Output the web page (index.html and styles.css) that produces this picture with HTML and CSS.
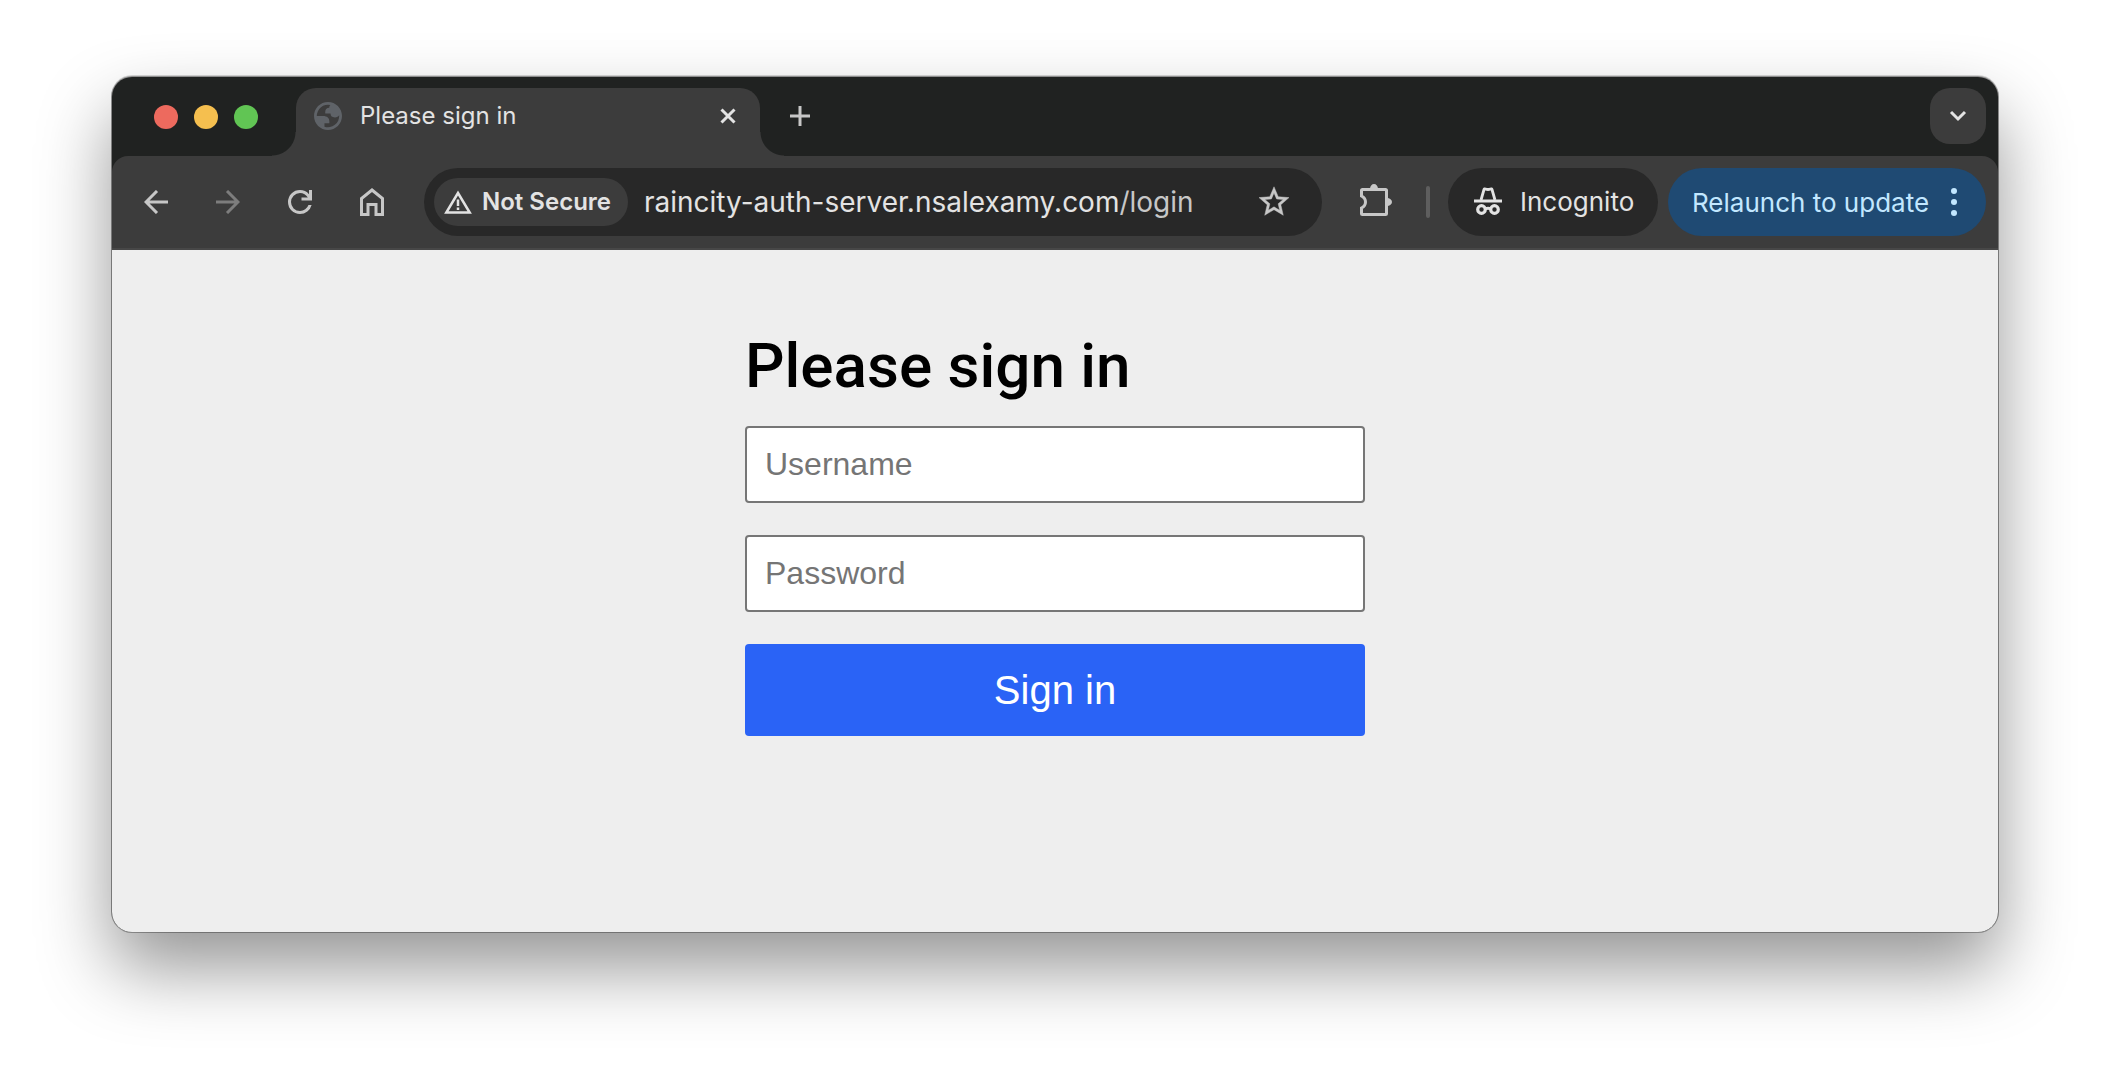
FILE: index.html
```html
<!DOCTYPE html>
<html lang="en">
<head>
<meta charset="utf-8">
<meta name="viewport" content="width=device-width, initial-scale=1">
<title>Please sign in</title>
<link rel="stylesheet" href="styles.css">
</head>
<body>
<div class="window">
  <header class="tab-strip">
    <div class="lights">
      <button class="light light-close" aria-label="Close window"></button>
      <button class="light light-min" aria-label="Minimise window"></button>
      <button class="light light-max" aria-label="Zoom window"></button>
    </div>
    <div class="tab">
      <svg class="favicon" viewBox="2 2 20 20" width="28" height="28" aria-hidden="true"><path fill="#5f6368" fill-rule="evenodd" d="M12 2C6.480 2 2 6.480 2 12s4.480 10 10 10 10-4.480 10-10S17.520 2 12 2zM4 12h4.400c3.407.022 4.922 1.730 4.543 5.127H9.488v2.470a8.004 8.004 0 0 0 10.498-8.083C19.327 12.504 18.332 13 17 13c-2.137 0-3.206-.916-3.206-2.750h-3.748c-.274-2.728.683-4.092 2.870-4.092 0-.975.327-1.597.811-1.970A8.004 8.004 0 0 0 4 12z"/></svg>
      <span class="tab-title">Please sign in</span>
      <button class="icon-button tab-close" aria-label="Close tab"><svg viewBox="0 0 16 16" width="16" height="16"><path d="M1.500 1.500l13 13M14.500 1.500l-13 13" stroke="#e3e3e3" stroke-width="3"/></svg></button>
    </div>
    <button class="icon-button new-tab" aria-label="New tab"><svg viewBox="0 0 20 20" width="20" height="20"><path d="M10 0v20M0 10h20" stroke="#c7c7c7" stroke-width="3"/></svg></button>
    <button class="icon-button tab-search" aria-label="Search tabs"><svg viewBox="0 0 18 12" width="18" height="12"><path d="M2 2l7 7 7-7" fill="none" stroke="#e3e3e3" stroke-width="3"/></svg></button>
  </header>

  <nav class="toolbar" aria-label="Browser toolbar">
    <div class="nav-buttons">
      <button class="icon-button" aria-label="Back"><svg viewBox="0 0 24 24" width="24" height="24"><path d="M24 12H2M13 1L2 12l11 11" fill="none" stroke="#c7c7c7" stroke-width="3"/></svg></button>
      <button class="icon-button" aria-label="Forward" disabled><svg viewBox="0 0 24 24" width="24" height="24"><path d="M0 12h22M11 1l11 11-11 11" fill="none" stroke="#7d7d7d" stroke-width="3"/></svg></button>
      <button class="icon-button" aria-label="Reload"><svg viewBox="4 4 16 16" width="24" height="24"><path fill="#c7c7c7" d="M12 20q-3.350 0-5.675-2.325T4 12t2.325-5.675T12 4q1.725 0 3.300.713T18 6.750V4h2v7h-7V9h4.200q-.8-1.400-2.187-2.200T12 6Q9.500 6 7.750 7.750T6 12t1.750 4.250T12 18q1.925 0 3.475-1.100T17.650 14h2.100q-.7 2.650-2.850 4.325T12 20z"/></svg></button>
      <button class="icon-button" aria-label="Home"><svg viewBox="0 0 24 28" width="24" height="28"><path d="M1.500 26.500V10.500L12 2l10.500 8.500v16h-6.500v-10H8v10z" fill="none" stroke="#c7c7c7" stroke-width="3"/></svg></button>
    </div>

    <div class="omnibox">
      <button class="security">
        <svg viewBox="0 0 28 24" width="28" height="24" aria-hidden="true"><path d="M14 3L2.300 22.500h23.400z" fill="none" stroke="#e3e3e3" stroke-width="2.500"/><path d="M14 9.500v6.500M14 17.500v2.500" stroke="#e3e3e3" stroke-width="2.500"/></svg>
        <span>Not Secure</span>
      </button>
      <a class="url" href="#">raincity-auth-server.nsalexamy.com<span class="url-path">/login</span></a>
      <button class="icon-button star" aria-label="Bookmark this tab"><svg viewBox="2 2 20 19" width="30" height="30"><path fill="#c7c7c7" stroke="#c7c7c7" stroke-width=".3" d="M22 9.240l-7.190-.62L12 2 9.190 8.630 2 9.240l5.460 4.730L5.820 21 12 17.270 18.180 21l-1.630-7.030L22 9.240zM12 15.400l-3.760 2.270 1-4.280-3.320-2.880 4.380-.38L12 6.100l1.710 4.040 4.380.38-3.320 2.880 1 4.280L12 15.400z"/></svg></button>
    </div>

    <button class="icon-button extensions" aria-label="Extensions"><svg viewBox="0 0 32 32" width="32" height="32"><path d="M3.500 5.500h22q1 0 1 1v23q0 1-1 1h-23q-1 0-1-1v-5.500q4-2 4-6t-4-6V6.500q0-1 1-1z" fill="none" stroke="#c7c7c7" stroke-width="3"/><path d="M10 5a4 5 0 0 1 8 0zM27 14a5 4 0 0 1 0 8z" fill="#c7c7c7"/></svg></button>
    <span class="divider"></span>
    <button class="pill incognito">
      <svg viewBox="0 0 28 28" width="28" height="28" aria-hidden="true"><path d="M0 12.500h28v3H0z" fill="#e3e3e3"/><path d="M7 13l3-10.500q.3-1 1.500-.5 2.500 1 5 0 1.200-.5 1.500.5L21 13" fill="none" stroke="#e3e3e3" stroke-width="2.800"/><circle cx="7.500" cy="22.500" r="3.800" fill="none" stroke="#e3e3e3" stroke-width="3.200"/><circle cx="20.500" cy="22.500" r="3.800" fill="none" stroke="#e3e3e3" stroke-width="3.200"/><path d="M11 22q3-1.500 6 0" fill="none" stroke="#e3e3e3" stroke-width="2.800"/></svg>
      <span>Incognito</span>
    </button>
    <button class="pill update">
      <span>Relaunch to update</span>
      <svg viewBox="0 0 6 28" width="6" height="28" aria-hidden="true"><g fill="#c2e7ff"><circle cx="3" cy="3" r="3"/><circle cx="3" cy="14" r="3"/><circle cx="3" cy="25" r="3"/></g></svg>
    </button>
  </nav>

  <main class="page">
    <form class="login">
      <h1>Please sign in</h1>
      <input type="text" name="username" placeholder="Username" aria-label="Username">
      <input type="password" name="password" placeholder="Password" aria-label="Password">
      <button type="submit">Sign in</button>
    </form>
  </main>
</div>
</body>
</html>
```
FILE: styles.css
```css
* {
  box-sizing: border-box;
}

body {
  margin: 0;
  padding: 77px 112px 148px;
  background: #fff;
  font-family: Inter, "Liberation Sans", sans-serif;
}

button {
  border: 0;
  padding: 0;
  background: none;
  font: inherit;
  color: inherit;
}

svg {
  display: block;
  flex: none;
}

.window {
  border-radius: 20px;
  overflow: hidden;
  background: #202221;
  box-shadow:
    0 0 0 1px rgba(0, 0, 0, .3),
    0 -1px 0 1px rgba(0, 0, 0, .15),
    0 36px 72px rgba(0, 0, 0, .42);
}

/* Tab strip */
.tab-strip {
  display: flex;
  height: 79px;
  padding: 11px 12px 0 42px;
}

.lights {
  display: flex;
  gap: 16px;
  width: 142px;
  padding-top: 17px;
}

.light {
  width: 24px;
  height: 24px;
  border-radius: 50%;
}

.light-close { background: #ed6a5e; }
.light-min { background: #f5bf4f; }
.light-max { background: #61c554; }

.tab {
  position: relative;
  display: flex;
  align-items: center;
  width: 464px;
  padding: 0 24px 12px 18px;
  border-radius: 20px 20px 0 0;
  background: #3c3c3c;
}

/* Flared feet that join the tab to the toolbar */
.tab::before,
.tab::after {
  content: "";
  position: absolute;
  bottom: 0;
  width: 24px;
  height: 24px;
}

.tab::before {
  right: 100%;
  background: radial-gradient(circle at 0 0, transparent 23px, #3c3c3c 24px);
}

.tab::after {
  left: 100%;
  background: radial-gradient(circle at 100% 0, transparent 23px, #3c3c3c 24px);
}

.tab-title {
  flex: 1;
  margin-left: 18px;
  font-size: 24px;
  line-height: 32px;
  color: #e3e3e3;
}

.icon-button {
  display: flex;
  align-items: center;
  justify-content: center;
}

.new-tab {
  width: 56px;
  height: 56px;
  margin-left: 12px;
}

.tab-search {
  width: 56px;
  height: 56px;
  margin-left: auto;
  border-radius: 20px;
  background: #3c3c3c;
}

/* Toolbar */
.toolbar {
  display: flex;
  align-items: center;
  height: 94px;
  padding: 0 12px;
  border-radius: 16px 16px 0 0;
  border-bottom: 2px solid #474747;
  background: #3c3c3c;
  font-size: 26px;
  line-height: 32px;
  color: #e3e3e3;
}

.nav-buttons {
  display: flex;
  gap: 8px;
}

.nav-buttons .icon-button {
  width: 64px;
  height: 64px;
}

.omnibox {
  flex: 1;
  display: flex;
  align-items: center;
  height: 68px;
  margin-left: 20px;
  padding: 0 33px 0 10px;
  border-radius: 34px;
  background: #282828;
}

.security {
  display: flex;
  align-items: center;
  gap: 10px;
  width: 194px;
  height: 48px;
  padding-left: 10px;
  border-radius: 24px;
  background: #3c3c3c;
  font-size: 24px;
  font-weight: 600;
  white-space: nowrap;
}

.url {
  flex: 1;
  margin-left: 16px;
  font-size: 28px;
  color: #e3e3e3;
  text-decoration: none;
  white-space: nowrap;
}

.url-path {
  color: #c7c7c7;
}

.star {
  padding-bottom: 2px;
}

.extensions {
  width: 104px;
  height: 68px;
  padding: 0 0 4px 4px;
}

.divider {
  width: 4px;
  height: 32px;
  margin-right: 18px;
  border-radius: 2px;
  background: #5e5e5e;
}

.pill {
  display: flex;
  align-items: center;
  height: 68px;
  border-radius: 34px;
  white-space: nowrap;
}

.pill span {
  padding-top: 2px;
}

.incognito {
  gap: 18px;
  width: 210px;
  padding: 0 0 2px 26px;
  background: #282828;
}

.update {
  justify-content: space-between;
  width: 318px;
  margin-left: 10px;
  padding: 0 29px 0 24px;
  background: #1f4a73;
  color: #c2e7ff;
}

/* Sign-in page */
.page {
  padding: 78px 32px 196px;
  background: #eee;
}

.login {
  display: flex;
  flex-direction: column;
  gap: 32px;
  max-width: 620px;
  margin: 0 auto;
}

.login h1 {
  margin: 0 0 -10px;
  font-family: Roboto, "Liberation Sans", sans-serif;
  font-size: 62px;
  font-weight: 500;
  line-height: 76px;
  color: #000;
}

.login input {
  width: 100%;
  height: 77px;
  padding: 0 18px;
  border: 2px solid #767676;
  border-radius: 4px;
  background: #fff;
  font-family: "Liberation Sans", Arial, sans-serif;
  font-size: 32px;
}

.login input::placeholder {
  color: #757575;
}

.login button {
  height: 92px;
  border-radius: 4px;
  background: #2a63f6;
  color: #fff;
  font-family: "Liberation Sans", Arial, sans-serif;
  font-size: 40px;
}
```
